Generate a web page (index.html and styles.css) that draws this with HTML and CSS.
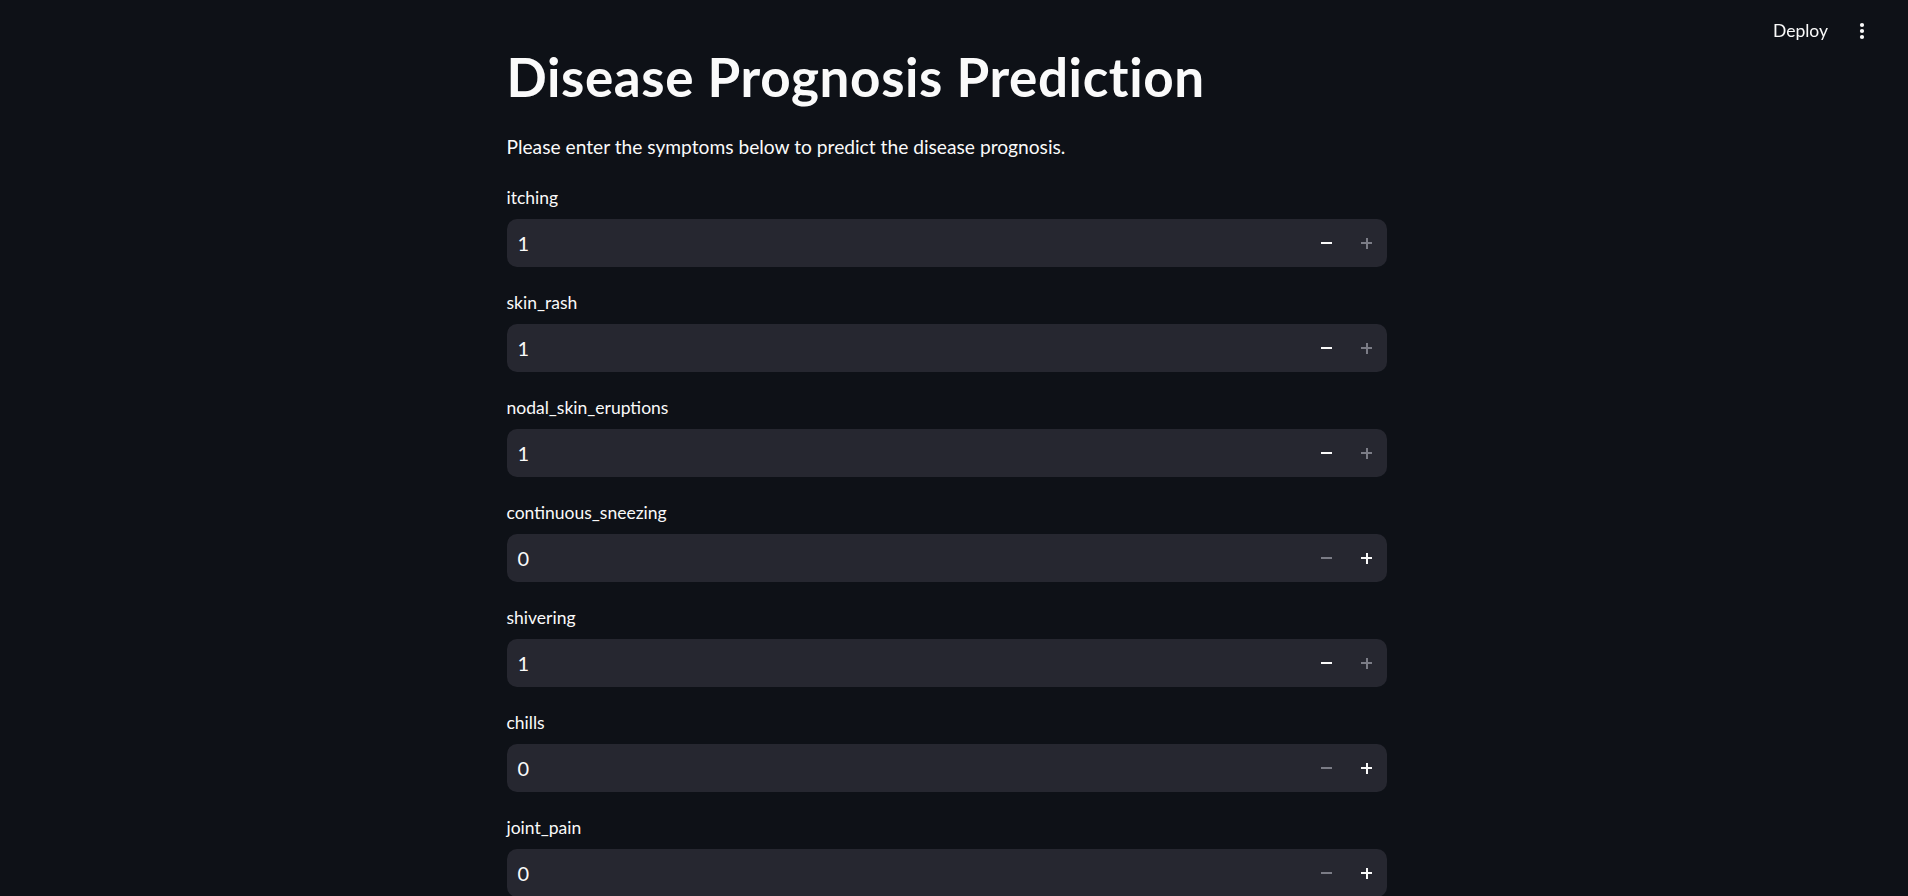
FILE: index.html
```html
<!DOCTYPE html>
<html lang="en">
<head>
<meta charset="utf-8">
<title>Disease Prognosis Prediction</title>
<link rel="stylesheet" href="styles.css">
</head>
<body>
<header class="toolbar">
  <span class="deploy">Deploy</span>
  <span class="menu" aria-label="Main menu">
    <svg width="6" height="18" viewBox="0 0 6 18"><circle cx="3" cy="3" r="2.1" fill="#fafafa"/><circle cx="3" cy="9" r="2.1" fill="#fafafa"/><circle cx="3" cy="15" r="2.1" fill="#fafafa"/></svg>
  </span>
</header>
<div class="app">
  <main class="block">
    <h1 class="title">Disease Prognosis Prediction</h1>
    <p class="intro">Please enter the symptoms below to predict the disease prognosis.</p>
    <div class="fields">
      <div class="field">
        <label class="label">itching</label>
        <div class="num"><span class="value">1</span><span class="step on"><i class="minus"></i></span><span class="step off"><i class="plus"></i></span></div>
      </div>
      <div class="field">
        <label class="label">skin_rash</label>
        <div class="num"><span class="value">1</span><span class="step on"><i class="minus"></i></span><span class="step off"><i class="plus"></i></span></div>
      </div>
      <div class="field">
        <label class="label">nodal_skin_eruptions</label>
        <div class="num"><span class="value">1</span><span class="step on"><i class="minus"></i></span><span class="step off"><i class="plus"></i></span></div>
      </div>
      <div class="field">
        <label class="label">continuous_sneezing</label>
        <div class="num"><span class="value">0</span><span class="step off"><i class="minus"></i></span><span class="step on"><i class="plus"></i></span></div>
      </div>
      <div class="field">
        <label class="label">shivering</label>
        <div class="num"><span class="value">1</span><span class="step on"><i class="minus"></i></span><span class="step off"><i class="plus"></i></span></div>
      </div>
      <div class="field">
        <label class="label">chills</label>
        <div class="num"><span class="value">0</span><span class="step off"><i class="minus"></i></span><span class="step on"><i class="plus"></i></span></div>
      </div>
      <div class="field">
        <label class="label">joint_pain</label>
        <div class="num"><span class="value">0</span><span class="step off"><i class="minus"></i></span><span class="step on"><i class="plus"></i></span></div>
      </div>
    </div>
  </main>
</div>
</body>
</html>
```
FILE: styles.css
```css
* { box-sizing: border-box; }
html, body {
  margin: 0;
  height: 100%;
  overflow: hidden;
  background: #0e1117;
}
body {
  font-family: Lato, "Source Sans Pro", "Liberation Sans", sans-serif;
  color: #fafafa;
}
.toolbar {
  position: fixed;
  top: 0;
  right: 0;
  height: 61px;
  display: flex;
  align-items: center;
  padding-right: 26px;
}
.deploy {
  font-size: 17.5px;
  padding: 0 14px 0 10px;
  line-height: 30px;
}
.menu {
  width: 40px;
  height: 40px;
  display: flex;
  align-items: center;
  justify-content: center;
}
.app {
  height: 100%;
  padding-right: 15px;
}
.block {
  width: 880px;
  margin: 0 auto;
  padding-top: 46px;
}
.title {
  margin: 0;
  font-size: 53px;
  line-height: 62px;
  font-weight: 700;
  letter-spacing: 0.6px;
}
.intro {
  margin: 24px 0 0;
  font-size: 19.2px;
  line-height: 30px;
}
.fields {
  margin-top: 20px;
  display: flex;
  flex-direction: column;
  gap: 20px;
}
.field {
  display: flex;
  flex-direction: column;
}
.label {
  font-size: 17.5px;
  line-height: 32px;
  margin-bottom: 5px;
}
.num {
  height: 48px;
  background: #262730;
  border-radius: 10px;
  display: flex;
  align-items: center;
}
.value {
  flex: 1;
  padding-left: 11px;
  font-size: 20px;
}
.step {
  width: 40px;
  height: 48px;
  display: flex;
  align-items: center;
  justify-content: center;
  color: #fafafa;
}
.step.off { color: #7b7c86; }
.minus, .plus {
  display: block;
  position: relative;
  width: 11px;
  height: 11px;
}
.minus::before, .plus::before, .plus::after {
  content: "";
  position: absolute;
  background: currentColor;
}
.minus::before, .plus::before {
  left: 0;
  top: 4.5px;
  width: 11px;
  height: 2px;
}
.plus::after {
  left: 4.5px;
  top: 0;
  width: 2px;
  height: 11px;
}
```
